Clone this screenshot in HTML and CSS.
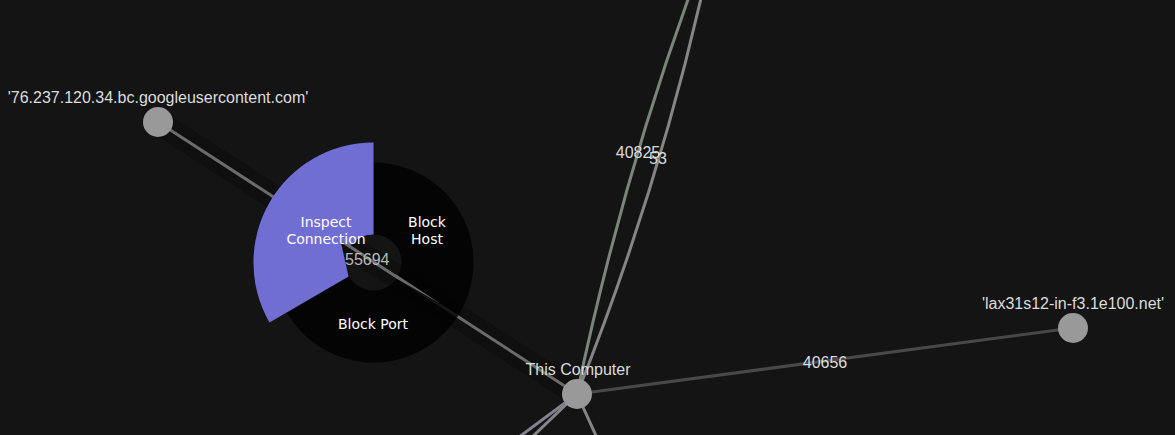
FILE: index.html
```html
<!DOCTYPE html>
<html lang="en">
<head>
<meta charset="utf-8">
<title>Network connections</title>
<link rel="stylesheet" href="styles.css">
</head>
<body>
<main class="graph">
  <svg class="layer" aria-label="Connection graph">
    <g class="edges">
      <path class="edge-glow" d="M158 122L577 394"/>
      <path class="edge selected" d="M158 122L577 394"/>
      <path class="edge dim" d="M577 394L1073 328"/>
      <path class="edge green" d="M577 394Q621 184 690 -6"/>
      <path class="edge light" d="M577 394Q656 196 702 -6"/>
      <path class="edge violet" d="M577 394L515 440"/>
      <path class="edge light" d="M577 394L529 440"/>
      <path class="edge light" d="M577 394L598 440"/>
    </g>
    <g class="nodes">
      <circle class="node" cx="158" cy="122" r="15"/>
      <circle class="node" cx="577" cy="394" r="15"/>
      <circle class="node" cx="1073" cy="328" r="15"/>
    </g>
    <g class="labels">
      <text x="158" y="103">'76.237.120.34.bc.googleusercontent.com'</text>
      <text x="578" y="375">This Computer</text>
      <text x="1073" y="309">'lax31s12-in-f3.1e100.net'</text>
      <text x="638" y="158">40825</text>
      <text x="658" y="164">53</text>
      <text x="825" y="368">40656</text>
    </g>
  </svg>
  <nav class="menu" aria-label="Connection actions">
    <svg class="wheel" viewBox="-120.500 -120.500 241 241" aria-hidden="true">
      <path class="ring" d="M0.500 -100A100 100 0 1 1 -86.600 50L-24.200 14A28 28 0 1 0 0.500 -28Z"/>
      <path class="slice" d="M0 -120A120 120 0 0 0 -104 60L-25 14L-33 -22L-23 -17A28 28 0 0 1 0 -28Z"/>
      <path class="pointer" d="M22 11.500L66 40.500L22 15.500Z"/>
    </svg>
    <button class="command inspect" type="button">Inspect Connection</button>
    <button class="command host" type="button">Block Host</button>
    <button class="command port" type="button">Block Port</button>
    <span class="value">55694</span>
  </nav>
</main>
</body>
</html>
```
FILE: styles.css
```css
body {
  margin: 0;
  background: #141414;
}
.graph {
  position: relative;
  height: 100vh;
  overflow: hidden;
}
.layer {
  display: block;
  width: 100%;
  height: 100%;
}
.edge {
  fill: none;
  stroke-width: 3px;
}
.edge-glow {
  stroke: #0f0f0f;
  stroke-width: 24px;
}
.selected { stroke: #6b6b6b; }
.dim { stroke: #484848; }
.green { stroke: #7b857b; }
.light { stroke: #858585; }
.violet { stroke: #81818f; }
.node { fill: #999; }
.labels text {
  font: 16px "Liberation Sans", Arial, sans-serif;
  fill: #dcdcdc;
  text-anchor: middle;
}
.menu {
  position: absolute;
  left: 253px;
  top: 142px;
  width: 241px;
  height: 241px;
}
.wheel {
  display: block;
  width: 100%;
  height: 100%;
}
.ring {
  fill: #000;
  fill-opacity: 0.8;
}
.slice { fill: #706ed3; }
.pointer { fill: #6b6b6b; }
.command {
  position: absolute;
  margin: 0;
  padding: 0;
  border: 0;
  background: none;
  color: #fff;
  font: 14px/17px "DejaVu Sans", sans-serif;
  text-align: center;
  cursor: pointer;
}
.inspect {
  left: 33px;
  top: 72px;
  width: 80px;
}
.host {
  left: 144px;
  top: 72px;
  width: 60px;
}
.port {
  left: 80px;
  top: 174px;
  width: 80px;
}
.value {
  position: absolute;
  left: 92px;
  top: 109px;
  color: #b8b8b8;
  font: 16px/18px "Liberation Sans", Arial, sans-serif;
}
```
